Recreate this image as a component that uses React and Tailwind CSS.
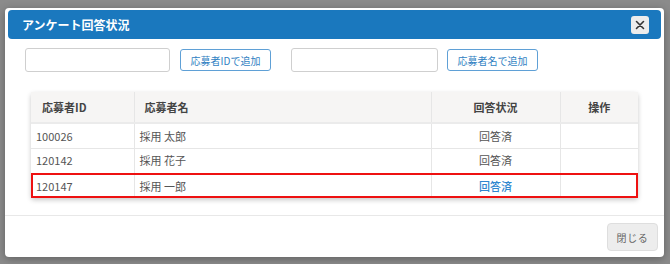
import React from 'react';

const font = { fontFamily: '"Noto Sans CJK JP", "Noto Sans", sans-serif' };

const rows = [
  { id: '100026', name: '採用 太郎', status: '回答済' },
  { id: '120142', name: '採用 花子', status: '回答済' },
  { id: '120147', name: '採用 一郎', status: '回答済', highlight: true },
];

function Cell({ className = '', children }) {
  return <td className={`h-[25px] px-[5px] border-l border-[#e6e6e6] first:border-l-0 ${className}`}>{children}</td>;
}

export default function App() {
  return (
    <div className="w-[670px] h-[264px] bg-[#8b8b8b] overflow-hidden" style={font}>
      <div className="ml-[5px] mt-[8px] w-[659px] h-[249px] bg-white rounded-[4px] shadow-[0_2px_8px_rgba(0,0,0,0.3)] flex flex-col">
        {/* header */}
        <div className="mx-[3px] mt-[2px] h-[29px] bg-[#1a78be] rounded-[4px] flex items-center justify-between pl-[14px] pr-[12px]">
          <span className="text-white font-bold text-[12px]">アンケート回答状況</span>
          <button className="w-[18px] h-[18px] bg-[#ececec] rounded-[3px] flex items-center justify-center">
            <svg width="10" height="10" viewBox="0 0 10 10">
              <path d="M1.5 1.5 L8.5 8.5 M8.5 1.5 L1.5 8.5" stroke="#333" strokeWidth="1.6" strokeLinecap="round" />
            </svg>
          </button>
        </div>

        {/* controls */}
        <div className="flex items-center mt-[9px] pl-[20px]">
          <div className="w-[145px] h-[24px] border border-[#cfcfcf] rounded-[3px]" />
          <button className="ml-[10px] w-[91px] h-[22px] border border-[#5fa0d6] rounded-[3px] text-[10px] text-[#2f7fc2]">
            応募者IDで追加
          </button>
          <div className="ml-[20px] w-[147px] h-[24px] border border-[#cfcfcf] rounded-[3px]" />
          <button className="ml-[9px] w-[91px] h-[22px] border border-[#5fa0d6] rounded-[3px] text-[10px] text-[#2f7fc2]">
            応募者名で追加
          </button>
        </div>

        {/* table */}
        <div className="mt-[20px] ml-[26px] w-[607px] shadow-[0_2px_5px_rgba(0,0,0,0.22)] rounded-[3px]">
          <table className="w-full border-collapse text-[11px] text-[#444]">
            <thead>
              <tr className="bg-[#f6f5f4] h-[31px] border-b-2 border-[#ebebeb]">
                <th className="w-[103px] px-[11px] text-left font-bold text-[#444]">応募者ID</th>
                <th className="w-[297px] px-[10px] text-left font-bold text-[#444] border-l border-[#e6e6e6]">応募者名</th>
                <th className="w-[129px] text-center font-bold text-[#444] border-l border-[#e6e6e6]">回答状況</th>
                <th className="text-center font-bold text-[#444] border-l border-[#e6e6e6]">操作</th>
              </tr>
            </thead>
            <tbody>
              {rows.map((r) => (
                <tr
                  key={r.id}
                  className={r.highlight ? 'outline-2 outline-[#ee1111] -outline-offset-2' : 'border-b border-[#e6e6e6]'}
                >
                  <Cell className="text-[#555]">{r.id}</Cell>
                  <Cell className="text-[#555]">{r.name}</Cell>
                  <Cell className={`text-center ${r.highlight ? 'text-[#2f86cf] font-medium' : 'text-[#555]'}`}>{r.status}</Cell>
                  <Cell />
                </tr>
              ))}
            </tbody>
          </table>
        </div>

        {/* footer */}
        <div className="mt-auto border-t border-[#e8e8e8] h-[42px] flex items-start justify-end pt-[7px] pr-[6px]">
          <button className="w-[51px] h-[28px] bg-[#ededed] border border-[#dedede] rounded-[4px] text-[10px] text-[#666] tracking-[0.06em]">
            閉じる
          </button>
        </div>
      </div>
    </div>
  );
}
